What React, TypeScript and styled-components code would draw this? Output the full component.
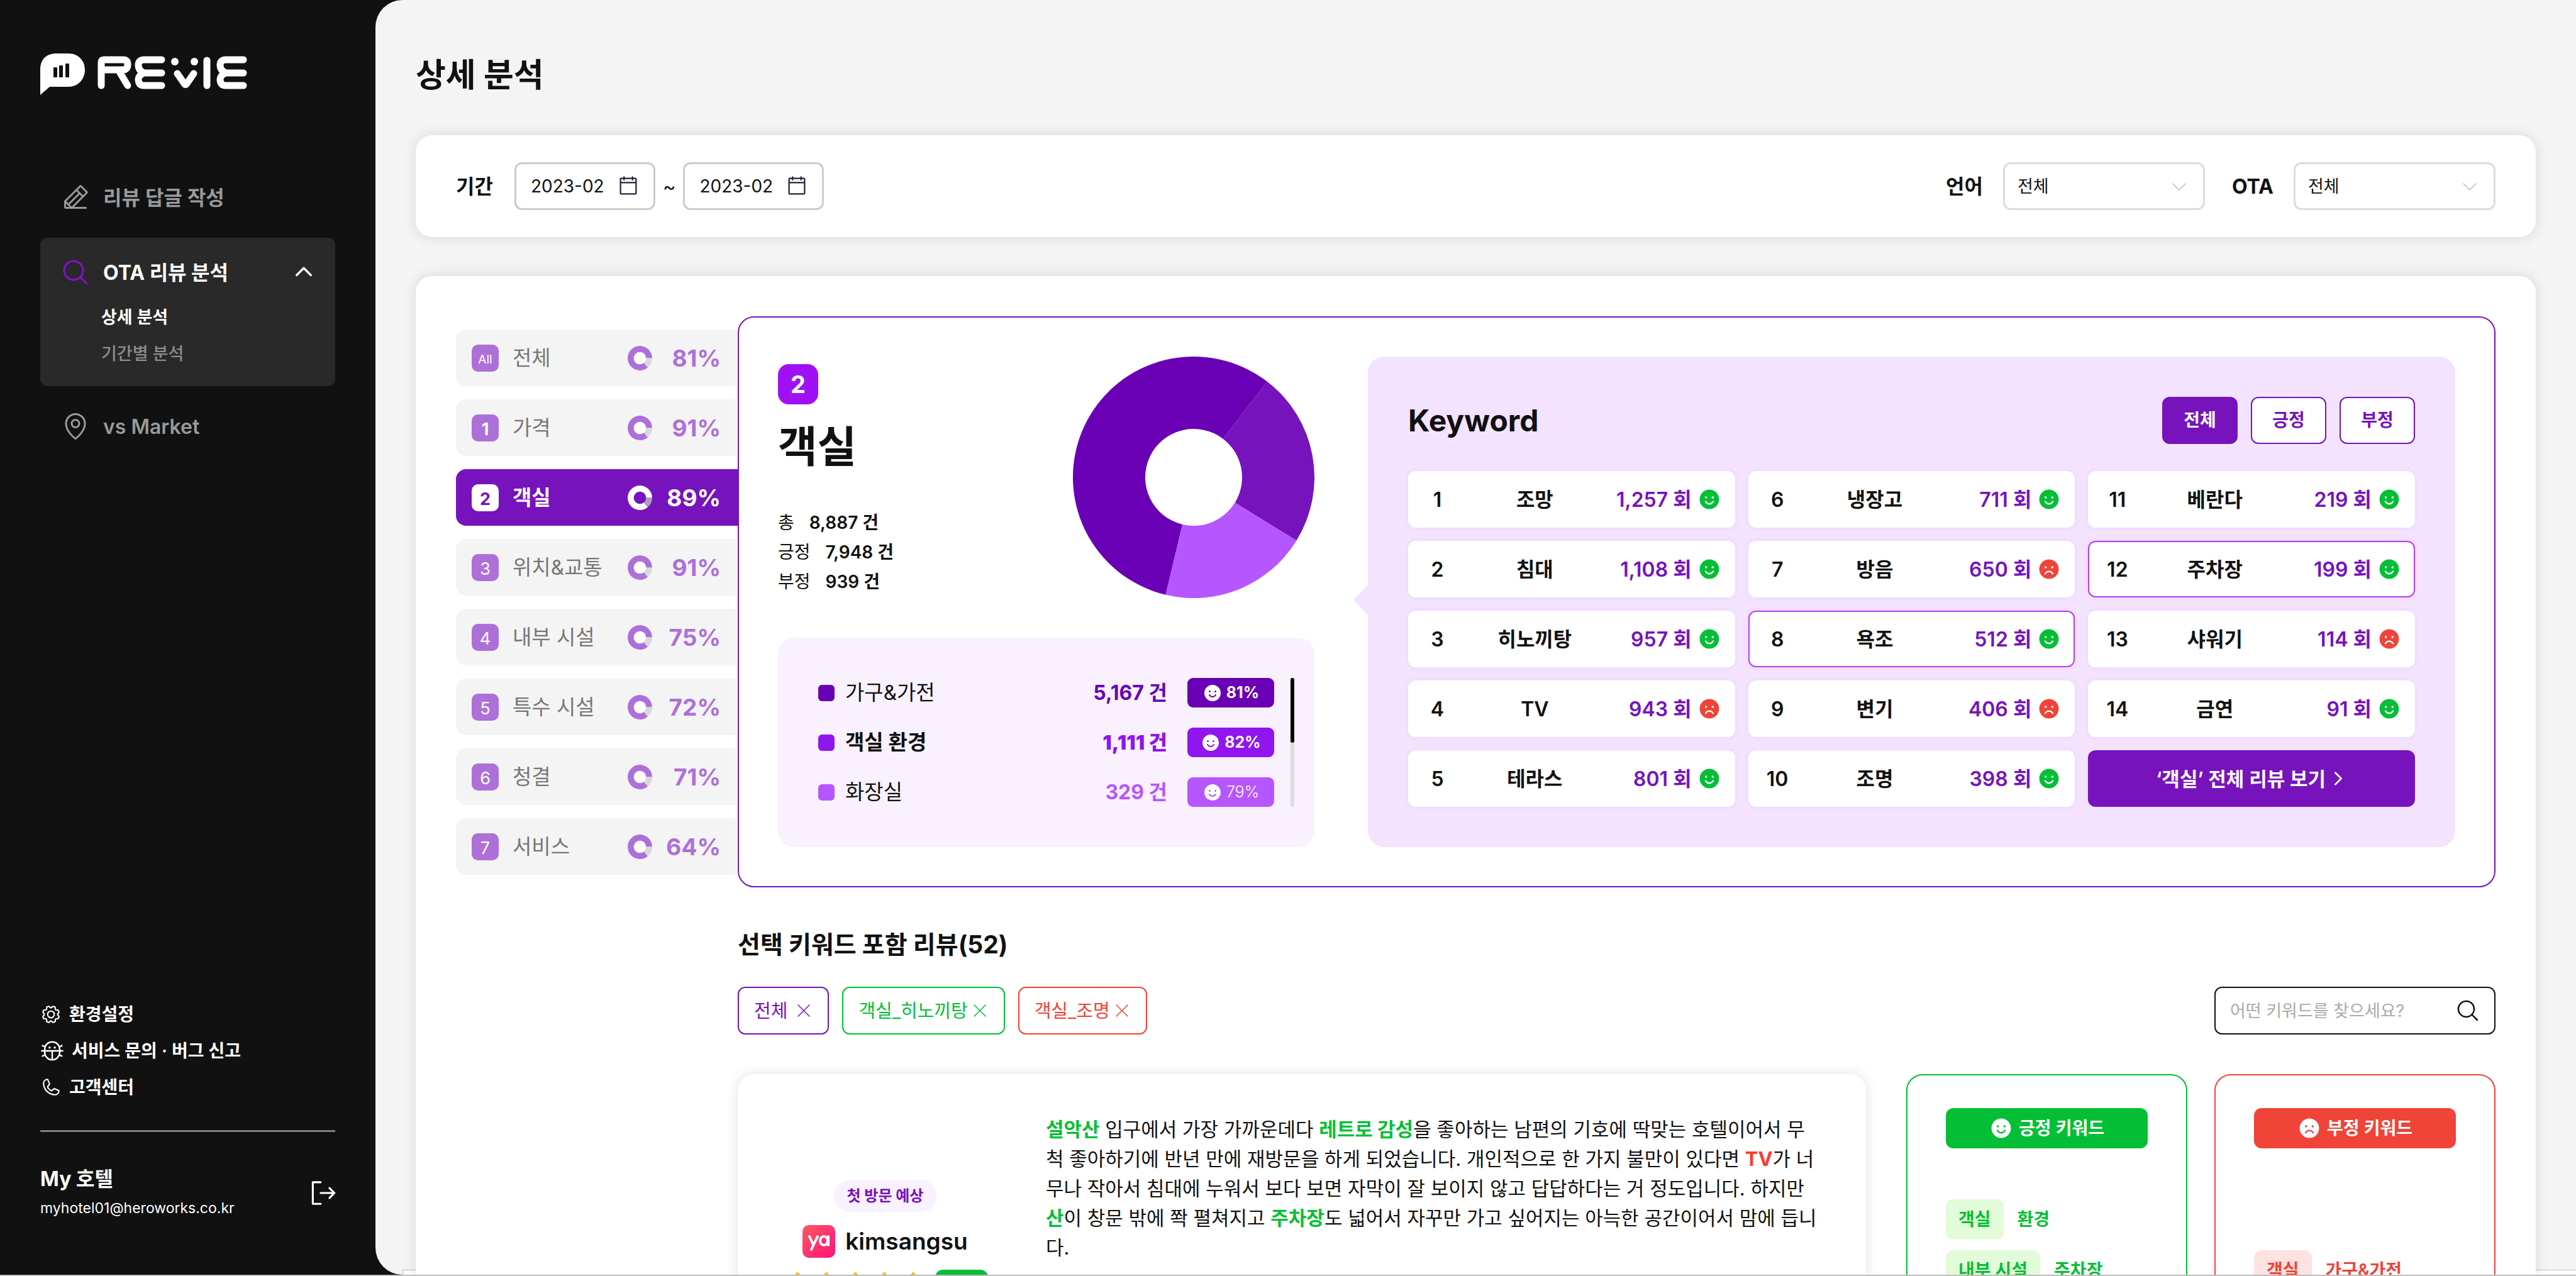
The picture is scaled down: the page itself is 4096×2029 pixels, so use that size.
import React from "react";
import styled, { createGlobalStyle, css } from "styled-components";
import {
  PiBug,
  PiCalendarBlank,
  PiCaretDownLight,
  PiCaretRightBold,
  PiCaretUpBold,
  PiGear,
  PiMagnifyingGlass,
  PiMapPin,
  PiPencilLine,
  PiPhone,
  PiSignOut,
  PiSmileyFill,
  PiSmileySadFill,
  PiStarFill,
  PiXLight,
} from "react-icons/pi";

const color = {
  ink: "#111111",
  purple: "#7613bc",
  purpleDeep: "#6a00b5",
  purpleVivid: "#9015ee",
  purpleLight: "#b656ff",
  lilac: "#f4e3ff",
  lilacPale: "#f9f1fe",
  green: "#04bf35",
  greenPale: "#e2fbd9",
  red: "#f04438",
  redPale: "#fee2e2",
  grey: "#f4f4f4",
  line: "#cccccc",
};

const GlobalStyle = createGlobalStyle`
  * { box-sizing: border-box; }
  body {
    margin: 0;
    color: ${color.ink};
    font-family: Inter, "Noto Sans CJK KR", sans-serif;
    font-size: 31px;
    line-height: 47px;
    background: #fff;
  }
  button, input, select { font: inherit; color: inherit; }
  button { cursor: pointer; padding: 0; border: 0; background: none; }
  a { color: inherit; text-decoration: none; }
  h1, h2, h3, p, ul, dl, dd { margin: 0; padding: 0; }
  ul { list-style: none; }
  svg { display: block; flex: none; }
`;

/* ---------- shell ---------- */

const Shell = styled.div`
  display: flex;
  height: 100vh;
  overflow: hidden;
  background: ${color.ink};
  border-bottom: 2px solid #bdbdbd;
`;

const Sidebar = styled.aside`
  display: flex;
  flex-direction: column;
  flex: none;
  width: 597px;
  padding: 85px 64px 84px;
  color: #fff;
`;

const Main = styled.main`
  position: relative;
  flex: 1;
  min-width: 0;
  padding: 80px 64px 0;
  background: ${color.grey};
  border-radius: 43px 0 0 43px;

  &::after {
    content: "";
    position: absolute;
    left: 43px;
    right: 0;
    bottom: 0;
    height: 7px;
    background: #fff;
    border: solid #bdbdbd;
    border-width: 1px 0 0 1px;
  }
`;

/* ---------- sidebar ---------- */

const Nav = styled.nav`
  display: flex;
  flex-direction: column;
  gap: 21px;
  margin-top: 120px;
`;

const NavLink = styled.a<{ $active?: boolean }>`
  display: flex;
  align-items: center;
  gap: 20px;
  height: 86px;
  padding: 0 32px;
  font-size: 32px;
  font-weight: ${(p) => (p.$active ? 700 : 600)};
  color: ${(p) => (p.$active ? "#fff" : "#999")};
`;

const NavGroup = styled.div`
  padding: 12px 0 22px;
  border-radius: 12px;
  background: #292929;

  ${NavLink} > svg:last-child {
    margin-left: auto;
  }
`;

const SubLink = styled.a<{ $active?: boolean }>`
  display: block;
  padding-left: 97px;
  font-size: 27px;
  line-height: 58px;
  font-weight: ${(p) => (p.$active ? 600 : 500)};
  color: ${(p) => (p.$active ? "#fff" : "#8c8c8c")};
`;

const SupportList = styled.ul`
  margin-top: auto;
  font-size: 28px;
  font-weight: 600;
  line-height: 58px;

  a {
    display: flex;
    align-items: center;
    gap: 12px;
  }
`;

const Profile = styled.div`
  display: flex;
  align-items: center;
  justify-content: space-between;
  margin-top: 39px;
  padding-top: 51px;
  border-top: 3px solid #808080;

  strong {
    display: block;
    font-size: 32px;
    line-height: 48px;
  }
  span {
    display: block;
    font-size: 23px;
    line-height: 44px;
  }
  button {
    margin-right: -5px;
  }
`;

/* ---------- shared ---------- */

const Card = styled.section`
  background: #fff;
  border-radius: 26px;
  box-shadow: 0 0 21px rgba(0, 0, 0, 0.12);
`;

const PageTitle = styled.h1`
  font-size: 52px;
  line-height: 80px;
  font-weight: 700;
`;

const Row = styled.div<{ $gap: number }>`
  display: flex;
  align-items: center;
  gap: ${(p) => p.$gap}px;
`;

/* ---------- filters ---------- */

const FilterBar = styled(Card)`
  display: flex;
  align-items: center;
  justify-content: space-between;
  margin-top: 55px;
  padding: 43px 64px;
`;

const FieldLabel = styled.label`
  font-size: 32px;
  font-weight: 700;
`;

const Field = styled.div<{ $width: number }>`
  position: relative;
  display: flex;
  align-items: center;
  width: ${(p) => p.$width}px;
  height: 76px;
  font-size: 28px;
  border: 3px solid ${color.line};
  border-radius: 12px;

  input,
  select {
    width: 100%;
    height: 100%;
    padding: 0 23px;
    border: 0;
    border-radius: 12px;
    outline: 0;
    background: none;
    appearance: none;
  }
  svg {
    position: absolute;
    right: 22px;
    pointer-events: none;
  }
`;

const SelectField = styled(Field)`
  border-color: #dcdcdc;

  select {
    padding: 0 20px;
    font-size: 27px;
  }
  svg {
    color: #bbb;
  }
`;

/* ---------- analysis ---------- */

const Analysis = styled(Card)`
  position: relative;
  z-index: 1;
  margin-top: 62px;
  padding: 64px;
`;

const Split = styled.div`
  display: flex;
`;

const Tabs = styled.div`
  display: flex;
  flex-direction: column;
  flex: none;
  gap: 21px;
  width: 448px;
  padding-top: 21px;
`;

const TabBadge = styled.span<{ $small?: boolean; $light?: boolean }>`
  display: grid;
  place-items: center;
  width: 43px;
  height: 43px;
  border-radius: 10px;
  font-size: ${(p) => (p.$small ? 19 : 27)}px;
  font-weight: ${(p) => (p.$light ? 400 : 700)};
  color: #fff;
  background: #ad70d8;
`;

const TabPercent = styled.span`
  margin-left: auto;
  font-size: 37px;
  font-weight: 700;
  color: #ad70d8;
`;

const Tab = styled.button<{ $active?: boolean }>`
  display: flex;
  align-items: center;
  height: 90px;
  margin-right: 3px;
  padding: 0 24px 0 25px;
  font-size: 33px;
  text-align: left;
  color: #777;
  background: ${color.grey};
  border-radius: 16px 0 0 16px;

  ${(p) =>
    p.$active &&
    css`
      margin-right: 0;
      padding-right: 27px;
      font-weight: 700;
      color: #fff;
      background: ${color.purple};

      ${TabBadge} {
        color: ${color.purple};
        background: #fff;
      }
      ${TabPercent} {
        color: #fff;
      }
    `}
`;

const TabName = styled.span`
  width: 183px;
  margin-left: 22px;
`;

const Panel = styled.div`
  display: flex;
  flex: 1;
  min-width: 0;
  gap: 85px;
  padding: 62px;
  border: 2px solid ${color.purple};
  border-radius: 26px;
`;

const Summary = styled.div`
  display: flex;
  flex-direction: column;
  justify-content: space-between;
  flex: none;
  width: 853px;
`;

const SummaryTop = styled.div`
  display: flex;
  justify-content: space-between;
`;

const Rank = styled.span`
  display: grid;
  place-items: center;
  width: 64px;
  height: 64px;
  margin-top: 12px;
  border-radius: 17px;
  font-size: 38px;
  font-weight: 700;
  color: #fff;
  background: #a010f5;
`;

const SummaryTitle = styled.h2`
  margin-top: 23px;
  font-size: 68px;
  line-height: 88px;
  font-weight: 700;
`;

const Stats = styled.dl`
  margin-top: 54px;
  font-size: 28px;
  line-height: 47px;

  div {
    display: flex;
    gap: 24px;
  }
  dd {
    font-weight: 600;
  }
`;

const Breakdown = styled.div`
  display: flex;
  gap: 26px;
  padding: 64px 32px 64px 64px;
  border-radius: 26px;
  background: ${color.lilacPale};
`;

const BreakdownList = styled.ul`
  display: flex;
  flex-direction: column;
  flex: 1;
  gap: 32px;
`;

const BreakdownItem = styled.li<{ $tone: string; $bold?: boolean }>`
  display: flex;
  align-items: center;
  height: 47px;
  font-size: 33px;
  font-weight: ${(p) => (p.$bold ? 700 : 400)};

  &::before {
    content: "";
    width: 26px;
    height: 26px;
    margin-right: 17px;
    border-radius: 6px;
    background: ${(p) => p.$tone};
  }
  strong {
    margin-left: auto;
    font-size: 32px;
    color: ${(p) => p.$tone};
  }
`;

const Score = styled.span<{ $tone: string; $light?: boolean }>`
  display: flex;
  align-items: center;
  justify-content: center;
  gap: 6px;
  width: 138px;
  height: 47px;
  margin-left: 32px;
  border-radius: 9px;
  font-size: 25px;
  font-weight: ${(p) => (p.$light ? 300 : 700)};
  color: #fff;
  background: ${(p) => p.$tone};
`;

const ScrollTrack = styled.div`
  width: 6px;
  border-radius: 3px;
  background: #dddddd;

  &::before {
    content: "";
    display: block;
    height: 50%;
    border-radius: 3px;
    background: #000;
  }
`;

/* ---------- keywords ---------- */

const KeywordPanel = styled.div`
  position: relative;
  flex: 1;
  min-width: 0;
  padding: 64px;
  border-radius: 26px;
  background: ${color.lilac};

  &::before {
    content: "";
    position: absolute;
    top: 363px;
    right: 100%;
    border: solid transparent;
    border-width: 24px 23px 24px 0;
    border-right-color: ${color.lilac};
  }
`;

const KeywordHead = styled.div`
  display: flex;
  align-items: center;
  justify-content: space-between;
  margin-bottom: 43px;

  h2 {
    font-size: 48px;
    font-weight: 700;
  }
`;

const FilterButton = styled.button<{ $active?: boolean }>`
  width: 120px;
  height: 75px;
  border: 2px solid ${color.purple};
  border-radius: 12px;
  font-size: 28px;
  font-weight: 600;
  color: ${(p) => (p.$active ? "#fff" : color.purple)};
  background: ${(p) => (p.$active ? color.purple : "#fff")};
`;

const KeywordGrid = styled.div`
  display: grid;
  grid-template-rows: repeat(5, 90px);
  grid-auto-columns: minmax(0, 1fr);
  grid-auto-flow: column;
  gap: 21px;
`;

const Keyword = styled.button<{ $selected?: boolean }>`
  display: grid;
  grid-template-columns: 41px 1fr 162px;
  align-items: center;
  padding: 0 20px 0 24px;
  border: 2px solid ${(p) => (p.$selected ? "#b93cf5" : "#fff")};
  border-radius: 12px;
  font-size: 32px;
  font-weight: 600;
  background: #fff;
  box-shadow: 0 0 9px rgba(144, 21, 238, 0.08);
`;

const KeywordCount = styled.span`
  display: flex;
  align-items: center;
  justify-content: flex-end;
  gap: 9px;
  white-space: nowrap;
  color: ${color.purple};
`;

const AllReviews = styled.button`
  display: flex;
  align-items: center;
  justify-content: center;
  gap: 4px;
  border-radius: 12px;
  font-weight: 600;
  color: #fff;
  background: ${color.purple};
`;

/* ---------- reviews ---------- */

const Reviews = styled.div`
  margin: 67px 0 0 448px;

  > h2 {
    font-size: 39px;
    line-height: 48px;
    font-weight: 700;
  }
`;

const Toolbar = styled.div`
  display: flex;
  align-items: center;
  justify-content: space-between;
  margin-top: 43px;
`;

const Tag = styled.button<{ $tone: string; $gap?: number }>`
  display: flex;
  align-items: center;
  gap: ${(p) => p.$gap ?? 3}px;
  height: 76px;
  padding: 0 22px 0 24px;
  border: 2px solid ${(p) => p.$tone};
  border-radius: 12px;
  font-size: 29px;
  color: ${(p) => p.$tone};
`;

const SearchField = styled(Field)`
  border: 2px solid ${color.ink};
  font-size: 27px;

  input::placeholder {
    color: #aaa;
    opacity: 1;
  }
  button {
    position: absolute;
    right: 22px;
  }
  button svg {
    position: static;
  }
`;

const ReviewRow = styled.div`
  display: flex;
  align-items: flex-start;
  margin-top: 63px;
`;

const ReviewCard = styled(Card)`
  display: flex;
  gap: 85px;
  flex: 1;
  min-width: 0;
  min-height: 480px;
  padding: 64px;
`;

const Reviewer = styled.div`
  display: flex;
  flex-direction: column;
  align-items: center;
  flex: none;
  width: 341px;
  padding-top: 104px;
`;

const VisitPill = styled.span`
  padding: 0 21px;
  border-radius: 26px;
  font-size: 24px;
  line-height: 51px;
  font-weight: 700;
  color: ${color.purple};
  background: ${color.lilacPale};
`;

const ReviewerName = styled.h3`
  display: flex;
  align-items: center;
  gap: 16px;
  margin-top: 21px;
  font-size: 37px;
  line-height: 52px;
  font-weight: 600;
`;

const Rating = styled.div`
  display: flex;
  align-items: center;
  margin-top: 19px;
  color: #ffc107;

  span {
    width: 84px;
    height: 48px;
    margin-left: 12px;
    border-radius: 12px;
    font-size: 27px;
    line-height: 48px;
    font-weight: 700;
    text-align: center;
    color: #fff;
    background: ${color.green};
  }
`;

const ReviewText = styled.p`
  flex: 1;
  white-space: nowrap;
`;

const Mark = styled.strong<{ $tone?: string }>`
  font-weight: 700;
  color: ${(p) => p.$tone ?? color.green};
`;

const ToneCard = styled.section<{ $tone: string; $gap: number }>`
  flex: none;
  width: 447px;
  min-height: 480px;
  margin-left: ${(p) => p.$gap}px;
  padding: 52px 61px;
  border: 2px solid ${(p) => p.$tone};
  border-radius: 26px;
  font-size: 28px;
  font-weight: 600;
  color: ${(p) => p.$tone};

  h3 {
    display: flex;
    align-items: center;
    justify-content: center;
    gap: 9px;
    height: 64px;
    border-radius: 12px;
    font-size: 28px;
    font-weight: 600;
    color: #fff;
    background: ${(p) => p.$tone};
  }
`;

const ChipList = styled.ul<{ $skip: number }>`
  display: flex;
  flex-direction: column;
  gap: 17px;
  margin-top: ${(p) => 81 + 81 * p.$skip}px;

  li {
    display: flex;
    align-items: center;
    gap: 22px;
  }
`;

const Chip = styled.span<{ $back: string }>`
  padding: 0 20px;
  border-radius: 12px;
  line-height: 64px;
  background: ${(p) => p.$back};
`;

/* ---------- drawings ---------- */

const Logo = () => (
  <svg width="330" height="66" viewBox="0 0 330 66" role="img" aria-label="REVIE">
    <path d="M0 66V26C0 9 10 0 26 0h19c15 0 26 11 26 26S60 53 45 53H15z" fill="#fff" />
    <g fill={color.ink}>
      <rect x="21" y="22" width="6" height="16" rx="1" />
      <rect x="30" y="19" width="6" height="19" rx="1" />
      <rect x="40" y="16" width="6" height="22" rx="1" />
    </g>
    <g fill="none" stroke="#fff" strokeWidth="11" strokeLinecap="round" strokeLinejoin="round">
      <path d="M97 51V14q0-4 4-4h31q7 0 7 7v1q0 8-8 8h-28M127 31l12 20" />
      <path d="M193 10h-28q-9 0-9 9 0 8 9 12h28M165 31q-9 4-9 10 0 10 9 10h28" />
      <path d="M218 32l11 16q2 3 4 0l11-16" />
      <path d="M265 11v40" />
      <path d="M323 10h-28q-9 0-9 9 0 8 9 12h28M295 31q-9 4-9 10 0 10 9 10h28" />
    </g>
    <circle cx="214" cy="13" r="6" fill="#fff" />
    <circle cx="245" cy="13" r="6" fill="#fff" />
  </svg>
);

const point = (c: number, r: number, deg: number) => {
  const a = ((deg - 90) * Math.PI) / 180;
  return `${(c + r * Math.cos(a)).toFixed(2)} ${(c + r * Math.sin(a)).toFixed(2)}`;
};

const Slice = (p: { c: number; outer: number; inner: number; from: number; to: number; fill: string }) => {
  const big = p.to - p.from > 180 ? 1 : 0;
  return (
    <path
      fill={p.fill}
      d={`M${point(p.c, p.outer, p.from)}A${p.outer} ${p.outer} 0 ${big} 1 ${point(p.c, p.outer, p.to)}L${point(
        p.c,
        p.inner,
        p.to
      )}A${p.inner} ${p.inner} 0 ${big} 0 ${point(p.c, p.inner, p.from)}Z`}
    />
  );
};

const ShareChart = () => (
  <svg width="384" height="384" viewBox="0 0 384 384" role="img" aria-label="객실 비율">
    <Slice c={192} outer={192} inner={77} from={193.4} to={397.5} fill={color.purpleDeep} />
    <Slice c={192} outer={192} inner={77} from={37.5} to={121.6} fill={color.purple} />
    <Slice c={192} outer={192} inner={77} from={121.6} to={193.4} fill={color.purpleLight} />
  </svg>
);

const MiniDonut = ({ active }: { active: boolean }) => (
  <svg width="39" height="39" viewBox="0 0 40 40" aria-hidden>
    {!active && <circle cx="20" cy="20" r="12" fill="#fff" />}
    <Slice c={20} outer={20} inner={10} from={140} to={450} fill={active ? "#fff" : "#ad70d8"} />
    <Slice c={20} outer={20} inner={10} from={90} to={140} fill={active ? "#ad9fb6" : "#d9d9d9"} />
  </svg>
);

const YaMark = () => (
  <svg width="52" height="52" viewBox="0 0 52 52" aria-hidden>
    <defs>
      <linearGradient id="ya" x1="0" y1="0" x2="1" y2="1">
        <stop offset="0" stopColor="#ff5a5f" />
        <stop offset="1" stopColor="#ff0f7b" />
      </linearGradient>
    </defs>
    <rect width="52" height="52" rx="10" fill="url(#ya)" />
    <g fill="none" stroke="#fff" strokeWidth="4" strokeLinecap="round" strokeLinejoin="round">
      <path d="M11 18l6 13M24 18l-10 21" />
      <ellipse cx="34" cy="25" rx="6" ry="7" />
      <path d="M41 18v14" />
    </g>
  </svg>
);

/* ---------- data ---------- */

const tabs = [
  { badge: "All", name: "전체", percent: 81 },
  { badge: "1", name: "가격", percent: 91 },
  { badge: "2", name: "객실", percent: 89, active: true },
  { badge: "3", name: "위치&교통", percent: 91 },
  { badge: "4", name: "내부 시설", percent: 75 },
  { badge: "5", name: "특수 시설", percent: 72 },
  { badge: "6", name: "청결", percent: 71 },
  { badge: "7", name: "서비스", percent: 64 },
];

const breakdown = [
  { name: "가구&가전", count: "5,167", percent: 81, tone: color.purpleDeep },
  { name: "객실 환경", count: "1,111", percent: 82, tone: color.purpleVivid, bold: true },
  { name: "화장실", count: "329", percent: 79, tone: color.purpleLight, light: true },
];

const keywords: { name: string; count: string; bad?: boolean; selected?: boolean }[] = [
  { name: "조망", count: "1,257" },
  { name: "침대", count: "1,108" },
  { name: "히노끼탕", count: "957" },
  { name: "TV", count: "943", bad: true },
  { name: "테라스", count: "801" },
  { name: "냉장고", count: "711" },
  { name: "방음", count: "650", bad: true },
  { name: "욕조", count: "512", selected: true },
  { name: "변기", count: "406", bad: true },
  { name: "조명", count: "398" },
  { name: "베란다", count: "219" },
  { name: "주차장", count: "199", selected: true },
  { name: "샤워기", count: "114", bad: true },
  { name: "금연", count: "91" },
];

const SideMenu = () => (
  <Sidebar>
    <Logo />
    <Nav>
      <NavLink href="#reply">
        <PiPencilLine size={48} />
        리뷰 답글 작성
      </NavLink>
      <NavGroup>
        <NavLink href="#ota" $active>
          <PiMagnifyingGlass size={48} color="#8510cf" />
          OTA 리뷰 분석
          <PiCaretUpBold size={36} />
        </NavLink>
        <SubLink href="#detail" $active>
          상세 분석
        </SubLink>
        <SubLink href="#period">기간별 분석</SubLink>
      </NavGroup>
      <NavLink href="#market">
        <PiMapPin size={48} />
        vs Market
      </NavLink>
    </Nav>
    <SupportList>
      <li>
        <a href="#settings">
          <PiGear size={34} />
          환경설정
        </a>
      </li>
      <li>
        <a href="#bug">
          <PiBug size={38} />
          서비스 문의 · 버그 신고
        </a>
      </li>
      <li>
        <a href="#center">
          <PiPhone size={34} />
          고객센터
        </a>
      </li>
    </SupportList>
    <Profile>
      <div>
        <strong>My 호텔</strong>
        <span>myhotel01@heroworks.co.kr</span>
      </div>
      <button aria-label="로그아웃">
        <PiSignOut size={50} />
      </button>
    </Profile>
  </Sidebar>
);

const Filters = () => (
  <FilterBar>
    <Row $gap={34}>
      <FieldLabel htmlFor="from">기간</FieldLabel>
      <Row $gap={12}>
        <Field $width={224}>
          <input id="from" defaultValue="2023-02" />
          <PiCalendarBlank size={36} color="#25233a" />
        </Field>
        ~
        <Field $width={224}>
          <input aria-label="종료" defaultValue="2023-02" />
          <PiCalendarBlank size={36} color="#25233a" />
        </Field>
      </Row>
    </Row>
    <Row $gap={43}>
      <Row $gap={32}>
        <FieldLabel htmlFor="lang">언어</FieldLabel>
        <SelectField $width={321}>
          <select id="lang">
            <option>전체</option>
          </select>
          <PiCaretDownLight size={32} />
        </SelectField>
      </Row>
      <Row $gap={32}>
        <FieldLabel htmlFor="ota">OTA</FieldLabel>
        <SelectField $width={321}>
          <select id="ota">
            <option>전체</option>
          </select>
          <PiCaretDownLight size={32} />
        </SelectField>
      </Row>
    </Row>
  </FilterBar>
);

const RoomSummary = () => (
  <Summary>
    <SummaryTop>
      <div>
        <Rank>2</Rank>
        <SummaryTitle>객실</SummaryTitle>
        <Stats>
          <div>
            <dt>총</dt>
            <dd>8,887 건</dd>
          </div>
          <div>
            <dt>긍정</dt>
            <dd>7,948 건</dd>
          </div>
          <div>
            <dt>부정</dt>
            <dd>939 건</dd>
          </div>
        </Stats>
      </div>
      <ShareChart />
    </SummaryTop>
    <Breakdown>
      <BreakdownList>
        {breakdown.map((b) => (
          <BreakdownItem key={b.name} $tone={b.tone} $bold={b.bold}>
            {b.name}
            <strong>{b.count} 건</strong>
            <Score $tone={b.tone} $light={b.light}>
              <PiSmileyFill size={32} />
              {b.percent}%
            </Score>
          </BreakdownItem>
        ))}
      </BreakdownList>
      <ScrollTrack />
    </Breakdown>
  </Summary>
);

const Keywords = () => (
  <KeywordPanel>
    <KeywordHead>
      <h2>Keyword</h2>
      <Row $gap={21}>
        <FilterButton $active>전체</FilterButton>
        <FilterButton>긍정</FilterButton>
        <FilterButton>부정</FilterButton>
      </Row>
    </KeywordHead>
    <KeywordGrid>
      {keywords.map((k, i) => (
        <Keyword key={k.name} $selected={k.selected}>
          <span>{i + 1}</span>
          <span>{k.name}</span>
          <KeywordCount>
            {k.count} 회
            {k.bad ? <PiSmileySadFill size={38} color={color.red} /> : <PiSmileyFill size={38} color={color.green} />}
          </KeywordCount>
        </Keyword>
      ))}
      <AllReviews>
        ‘객실’ 전체 리뷰 보기
        <PiCaretRightBold size={30} />
      </AllReviews>
    </KeywordGrid>
  </KeywordPanel>
);

const ReviewSection = () => (
  <Reviews>
    <h2>선택 키워드 포함 리뷰(52)</h2>
    <Toolbar>
      <Row $gap={21}>
        <Tag $tone={color.purple} $gap={10}>
          전체 <PiXLight size={32} />
        </Tag>
        <Tag $tone={color.green}>
          객실_히노끼탕 <PiXLight size={32} />
        </Tag>
        <Tag $tone={color.red}>
          객실_조명 <PiXLight size={32} />
        </Tag>
      </Row>
      <SearchField $width={447}>
        <input aria-label="키워드 검색" placeholder="어떤 키워드를 찾으세요?" />
        <button aria-label="검색">
          <PiMagnifyingGlass size={40} />
        </button>
      </SearchField>
    </Toolbar>
    <ReviewRow>
      <ReviewCard>
        <Reviewer>
          <VisitPill>첫 방문 예상</VisitPill>
          <ReviewerName>
            <YaMark />
            kimsangsu
          </ReviewerName>
          <Rating>
            {[1, 2, 3, 4, 5].map((n) => (
              <PiStarFill key={n} size={46} />
            ))}
            <span>5.0</span>
          </Rating>
        </Reviewer>
        <ReviewText>
          <Mark>설악산</Mark> 입구에서 가장 가까운데다 <Mark>레트로 감성</Mark>을 좋아하는 남편의 기호에 딱맞는 호텔이어서 무
          <br />
          척 좋아하기에 반년 만에 재방문을 하게 되었습니다. 개인적으로 한 가지 불만이 있다면{" "}
          <Mark $tone="#fb3b2d">TV</Mark>가 너
          <br />
          무나 작아서 침대에 누워서 보다 보면 자막이 잘 보이지 않고 답답하다는 거 정도입니다. 하지만
          <br />
          <Mark>산</Mark>이 창문 밖에 쫙 펼쳐지고 <Mark>주차장</Mark>도 넓어서 자꾸만 가고 싶어지는 아늑한 공간이어서 맘에 듭니
          <br />
          다.
        </ReviewText>
      </ReviewCard>
      <ToneCard $tone={color.green} $gap={64}>
        <h3>
          <PiSmileyFill size={38} />
          긍정 키워드
        </h3>
        <ChipList $skip={0}>
          <li>
            <Chip $back={color.greenPale}>객실</Chip>환경
          </li>
          <li>
            <Chip $back={color.greenPale}>내부 시설</Chip>주차장
          </li>
        </ChipList>
      </ToneCard>
      <ToneCard $tone={color.red} $gap={43}>
        <h3>
          <PiSmileySadFill size={38} />
          부정 키워드
        </h3>
        <ChipList $skip={1}>
          <li>
            <Chip $back={color.redPale}>객실</Chip>가구&amp;가전
          </li>
        </ChipList>
      </ToneCard>
    </ReviewRow>
  </Reviews>
);

export default function App() {
  return (
    <>
      <GlobalStyle />
      <Shell>
        <SideMenu />
        <Main>
          <PageTitle>상세 분석</PageTitle>
          <Filters />
          <Analysis>
            <Split>
              <Tabs>
                {tabs.map((t) => (
                  <Tab key={t.name} $active={t.active}>
                    <TabBadge $small={t.badge === "All"} $light={!t.active && t.badge !== "1"}>
                      {t.badge}
                    </TabBadge>
                    <TabName>{t.name}</TabName>
                    <MiniDonut active={!!t.active} />
                    <TabPercent>{t.percent}%</TabPercent>
                  </Tab>
                ))}
              </Tabs>
              <Panel>
                <RoomSummary />
                <Keywords />
              </Panel>
            </Split>
            <ReviewSection />
          </Analysis>
        </Main>
      </Shell>
    </>
  );
}
